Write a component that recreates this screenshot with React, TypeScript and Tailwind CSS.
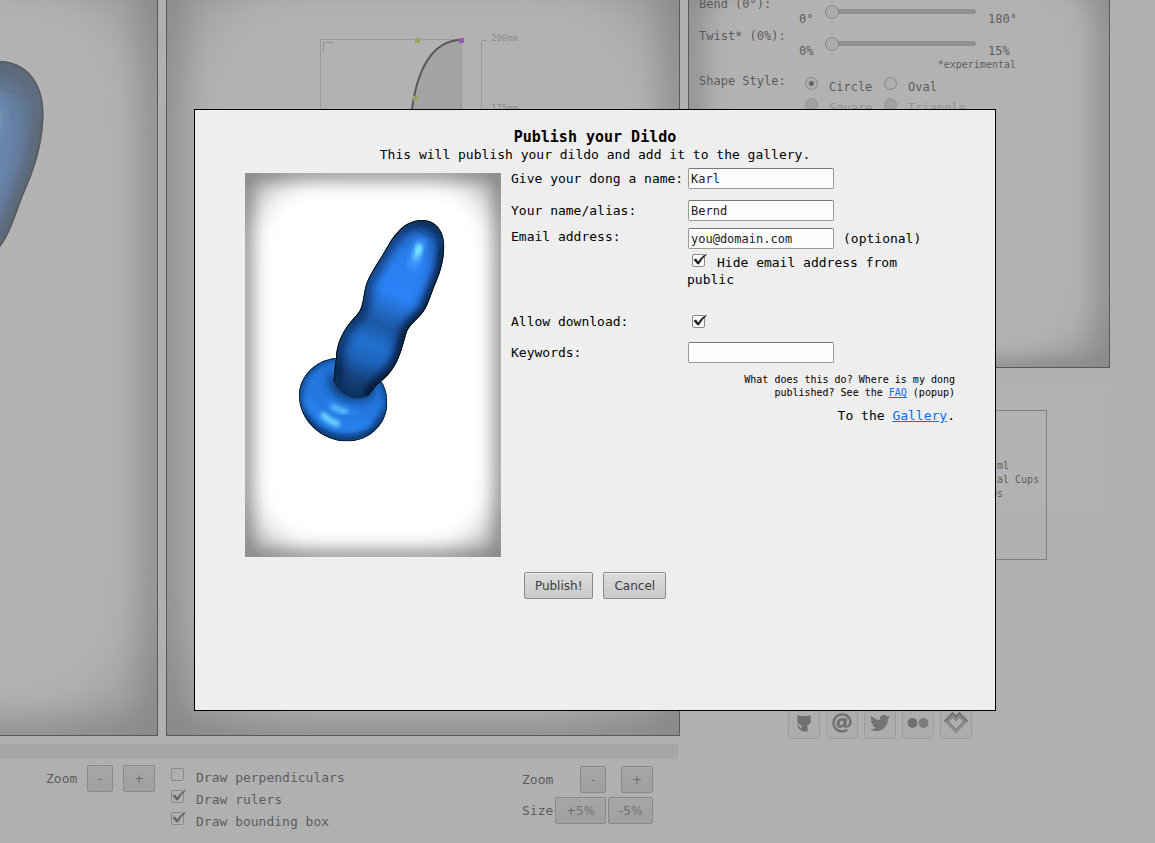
import React from "react";
import { FaAt, FaTwitter } from "react-icons/fa";

const SHAFT =
  "M547 165 C585 165 613 195 613 245 C611 300 596 335 580 372 C568 405 560 430 545 447 C530 465 512 478 502 497 C493 520 488 555 470 592 C455 622 435 640 418 655 C402 667 396 680 385 692 C350 715 300 690 280 650 C284 625 283 600 288 580 C288 550 297 520 318 488 C335 463 350 452 360 435 C372 410 370 375 382 348 C395 318 425 275 446 238 C470 197 500 165 547 165 Z";
const SHAFT_SIDES =
  "M280 650 C284 625 283 600 288 580 C288 550 297 520 318 488 C335 463 350 452 360 435 C372 410 370 375 382 348 C395 318 425 275 446 238 C470 197 500 165 547 165 C585 165 613 195 613 245 C611 300 596 335 580 372 C568 405 560 430 545 447 C530 465 512 478 502 497 C493 520 488 555 470 592 C455 622 435 640 418 655 C402 667 396 680 385 692";
const SHAFT_RIGHT =
  "M613 245 C611 300 596 335 580 372 C568 405 560 430 545 447 C530 465 512 478 502 497 C493 520 488 555 470 592 C455 622 435 640 418 655 C402 667 396 680 385 692";
const FOOT =
  "M287 579 C225 585 177 635 177 692 C177 765 245 829 322 829 C390 829 442 775 442 713 C442 688 435 665 425 650 L350 620 Z";
const FOOT_RIM =
  "M287 579 C225 585 177 635 177 692 C177 765 245 829 322 829 C390 829 442 775 442 713 C442 688 435 665 425 650";

function Vignette({ id }: { id: string }) {
  return (
    <svg
      className="absolute inset-0 h-full w-full"
      viewBox="0 0 256 384"
      preserveAspectRatio="none"
      aria-hidden="true"
    >
      <defs>
        <filter
          id={`${id}-soft`}
          x="-20%"
          y="-20%"
          width="140%"
          height="140%"
          colorInterpolationFilters="sRGB"
        >
          <feGaussianBlur stdDeviation="14" />
        </filter>
        <filter id={`${id}-edge`} x="-20%" y="-20%" width="140%" height="140%">
          <feGaussianBlur stdDeviation="8" />
        </filter>
      </defs>
      <rect width="256" height="384" fill="#b8b8b8" />
      <rect x="1" y="1" width="254" height="382" rx="72" fill="#ffffff" filter={`url(#${id}-soft)`} />
      <rect
        width="256"
        height="384"
        fill="none"
        stroke="#000000"
        strokeWidth="12"
        opacity="0.35"
        filter={`url(#${id}-edge)`}
      />
    </svg>
  );
}

function Model({ id }: { id: string }) {
  return (
    <svg className="absolute inset-0 h-full w-full" viewBox="15 24 768 1152" aria-hidden="true">
      <defs>
        <clipPath id={`${id}-shaft`}>
          <path d={SHAFT} />
        </clipPath>
        <clipPath id={`${id}-foot`}>
          <path d={FOOT} />
        </clipPath>
        <linearGradient id={`${id}-body`} gradientUnits="userSpaceOnUse" x1="565" y1="165" x2="325" y2="700">
          <stop offset="0" stopColor="#164a8c" />
          <stop offset="0.1" stopColor="#2370d4" />
          <stop offset="0.25" stopColor="#2a80f2" />
          <stop offset="0.42" stopColor="#2a82f6" />
          <stop offset="0.52" stopColor="#2269c4" />
          <stop offset="0.59" stopColor="#1c59a6" />
          <stop offset="0.7" stopColor="#2170d0" />
          <stop offset="0.78" stopColor="#1f66be" />
          <stop offset="0.9" stopColor="#143f78" />
          <stop offset="1" stopColor="#0f3058" />
        </linearGradient>
        <filter id={`${id}-b5`} x="-50%" y="-50%" width="200%" height="200%">
          <feGaussianBlur stdDeviation="6" />
        </filter>
        <filter id={`${id}-b10`} x="-50%" y="-50%" width="200%" height="200%">
          <feGaussianBlur stdDeviation="10" />
        </filter>
        <filter id={`${id}-b18`} x="-50%" y="-50%" width="200%" height="200%">
          <feGaussianBlur stdDeviation="18" />
        </filter>
      </defs>
      <g clipPath={`url(#${id}-foot)`}>
        <path d={FOOT} fill="#2478e0" />
        <path d={FOOT_RIM} fill="none" stroke="#062a58" strokeWidth="12" filter={`url(#${id}-b10)`} />
        <path d="M185 740 C225 810 310 850 400 800 L440 740" fill="none" stroke="#0b3468" strokeWidth="16" filter={`url(#${id}-b10)`} />
        <path d="M268 630 C262 690 335 722 398 692 L400 640 Z" fill="#0a2a52" opacity="0.95" filter={`url(#${id}-b18)`} />
        <path d="M205 700 C225 765 300 805 385 770" fill="none" stroke="#2f8cfa" strokeWidth="24" opacity="0.6" filter={`url(#${id}-b10)`} />
        <path d="M262 706 Q290 742 350 742" fill="none" stroke="#3490f8" strokeWidth="16" opacity="0.8" filter={`url(#${id}-b10)`} />
        <path d="M275 722 Q294 738 322 740" fill="none" stroke="#5cc4ff" strokeWidth="16" filter={`url(#${id}-b5)`} />
        <path d="M246 746 Q266 770 298 778" fill="none" stroke="#6fdcff" strokeWidth="18" filter={`url(#${id}-b5)`} />
        <g fill="none" stroke="#0d396e" strokeWidth="3" opacity="0.3">
          <path d="M195 750 C230 810 330 832 412 778" />
          <path d="M202 768 C240 820 335 842 410 790" />
          <path d="M214 784 C252 832 335 848 402 806" />
        </g>
        <path d={FOOT_RIM} fill="none" stroke="#04172f" strokeWidth="5" />
      </g>
      <g clipPath={`url(#${id}-shaft)`}>
        <path d={SHAFT} fill={`url(#${id}-body)`} />
        <path d={SHAFT_SIDES} fill="none" stroke="#020c1c" strokeWidth="30" opacity="0.8" filter={`url(#${id}-b18)`} />
        <path d={SHAFT_RIGHT} fill="none" stroke="#020c1c" strokeWidth="20" opacity="0.7" filter={`url(#${id}-b10)`} />
        <path d="M288 672 C308 698 345 712 376 696" fill="none" stroke="#0f3564" strokeWidth="14" filter={`url(#${id}-b5)`} />
        <g fill="none" stroke="#0c366b" strokeWidth="3" opacity="0.4">
          <path d="M545 176 Q562 192 590 186" />
          <path d="M535 180 Q560 206 602 200" />
          <path d="M526 188 Q560 222 608 214" />
        </g>
        <path d="M546 225 L515 310" fill="none" stroke="#3c98ff" strokeWidth="34" filter={`url(#${id}-b10)`} />
        <path d="M541 240 L524 286" fill="none" stroke="#5cc0ff" strokeWidth="22" filter={`url(#${id}-b5)`} />
        <path d="M540 242 L530 268" fill="none" stroke="#7cf0ff" strokeWidth="16" filter={`url(#${id}-b5)`} />
        <path d={SHAFT_SIDES} fill="none" stroke="#020a16" strokeWidth="5" />
      </g>
    </svg>
  );
}

function Curve() {
  return (
    <svg className="absolute inset-0 h-full w-full" viewBox="0 0 512 768" aria-hidden="true">
      <path
        d="M294.500 73 C264 73 250 105 245 142 C235 230 190 300 200 420 L294.500 420 Z"
        fill="#d6d6d6"
      />
      <rect x="153.500" y="72.500" width="141" height="400" fill="none" stroke="#bbbbbb" />
      <path d="M156.500 85 V75.500 H166" fill="none" stroke="#a0a0a0" />
      <path d="M294.500 73 C264 73 250 105 245 142 C235 230 190 300 200 420" fill="none" stroke="#000000" strokeWidth="2" />
      <rect x="248" y="71" width="5" height="5" fill="#bcd333" />
      <rect x="246" y="129" width="5" height="5" fill="#bcd333" />
      <rect x="292" y="71" width="5" height="5" fill="#c000ff" />
      <path d="M320 73.500 H314.500 V470" fill="none" stroke="#b4b4b4" />
      <g fill="#909090" fontSize="9" fontFamily="'DejaVu Sans Mono', monospace">
        <text x="324" y="74">200mm</text>
        <text x="324" y="144">175mm</text>
      </g>
    </svg>
  );
}

function Canvas({ id, children }: { id: string; children: React.ReactNode }) {
  return (
    <div className="relative h-[770px] w-[514px] border border-black">
      <Vignette id={id} />
      {children}
    </div>
  );
}

function Check({ id, checked }: { id: string; checked?: boolean }) {
  return (
    <span className="relative inline-block h-[13px] w-[13px] shrink-0">
      <input
        id={id}
        type="checkbox"
        defaultChecked={checked}
        className="peer block h-[13px] w-[13px] appearance-none rounded-xs border border-[#8a8a8a] bg-[#fafafa]"
      />
      <svg
        className="pointer-events-none absolute bottom-0 left-0 hidden h-4 w-4 peer-checked:block"
        viewBox="0 0 16 16"
        aria-hidden="true"
      >
        <path d="M1.500 8.800 L4 7.600 L6.200 10.500 Q9.500 5.200 14.200 3 L14.800 3.600 Q10.500 7.200 7 13.300 H5.400 Z" fill="#222222" />
      </svg>
    </span>
  );
}

function Button({ children, className = "" }: { children: React.ReactNode; className?: string }) {
  return (
    <button
      type="button"
      className={`h-[27px] rounded-xs border border-[#8a8a8a] bg-linear-to-b from-[#dcdcdc] to-[#c9c9c9] px-[10px] font-['DejaVu_Sans',sans-serif] text-[12px] text-[#3c3c3c] shadow-[inset_0_1px_0_#eeeeee] ${className}`}
    >
      {children}
    </button>
  );
}

function SliderRow({ id, label, min, max }: { id: string; label: string; min: string; max: string }) {
  return (
    <div className="flex h-8 items-start">
      <label htmlFor={id} className="w-[100px] leading-[18px]">
        {label}
      </label>
      <span className="mt-4 w-[26px] leading-4">{min}</span>
      <input
        id={id}
        type="range"
        min="0"
        max="100"
        defaultValue="0"
        className="mt-[14px] h-[5px] w-[151px] appearance-none rounded-full bg-[#a0a0a0] [&::-webkit-slider-thumb]:h-[14px] [&::-webkit-slider-thumb]:w-[14px] [&::-webkit-slider-thumb]:appearance-none [&::-webkit-slider-thumb]:rounded-full [&::-webkit-slider-thumb]:border [&::-webkit-slider-thumb]:border-[#808080] [&::-webkit-slider-thumb]:bg-[#eeeeee]"
      />
      <span className="mt-4 ml-3 leading-4">{max}</span>
    </div>
  );
}

function Shape({ label, checked, disabled }: { label: string; checked?: boolean; disabled?: boolean }) {
  return (
    <label className={`flex items-start gap-[11px] ${disabled ? "text-[#aaaaaa]" : ""}`}>
      <input
        type="radio"
        name="shape"
        defaultChecked={checked}
        disabled={disabled}
        className="h-[13px] w-[13px] appearance-none rounded-full border border-[#808080] bg-[#f4f4f4] checked:bg-[radial-gradient(circle,#222222_0_2px,transparent_3px)] disabled:border-[#aaaaaa] disabled:bg-[#cccccc]"
      />
      <span className="mt-[2px] leading-4">{label}</span>
    </label>
  );
}

function CatIcon() {
  return (
    <svg className="h-[18px] w-4" viewBox="0 0 16 18" aria-hidden="true">
      <path
        d="M1.800 1 L4.500 2 H11.500 L14.200 1 Q15 3 14.600 4.500 Q15.200 6 14.800 8 Q14 11 10.800 11.400 Q11.500 12 11.500 13.500 V16 L12.500 17.500 H5 L6 16.200 Q3.500 16.200 2.700 14.500 Q2.200 12.800 1 12.300 L1.200 11.300 Q3 11.400 3.800 13 Q4.500 14.300 5.600 14 Q5.300 12 5.800 11.400 Q2 11 1.500 8 Q1 6 1.600 4.500 Q1 3 1.800 1 Z"
        fill="#444444"
      />
    </svg>
  );
}

function HeartIcon() {
  return (
    <svg className="h-[22px] w-6" viewBox="0 0 24 22" aria-hidden="true">
      <path d="M0.500 9.500 L8.500 1 L12 4.500 L15.500 1 L23.500 9.500 L12 21.500 Z" fill="#8c8c8c" />
      <path d="M0.500 9.500 L8.500 1 L12 4.500 L15.500 1 L23.500 9.500" fill="none" stroke="#2a2a2a" strokeWidth="1.500" />
      <path d="M4.500 9.500 L8.500 5.200 L12 8.800 L15.500 5.200 L19.500 9.500 L12 17.200 Z" fill="#f4f4f4" stroke="#666666" strokeWidth="1" />
    </svg>
  );
}

const SOCIAL = [
  { name: "GitHub", icon: <CatIcon /> },
  { name: "Mail", icon: <FaAt size={20} /> },
  { name: "Twitter", icon: <FaTwitter size={20} /> },
  {
    name: "Flickr",
    icon: (
      <svg className="h-[22px] w-[22px]" viewBox="0 0 22 22" aria-hidden="true">
        <circle cx="5.500" cy="11" r="5" fill="#444444" />
        <circle cx="16.500" cy="11" r="5" fill="#666666" />
      </svg>
    ),
  },
  { name: "Heart", icon: <HeartIcon /> },
];

function Editor() {
  return (
    <div className="-mt-[34px] -ml-[356px] flex w-max items-start gap-2">
      <div className="flex flex-col">
        <div className="flex gap-2">
          <Canvas id="preview">
            <Model id="preview-model" />
          </Canvas>
          <Canvas id="bezier">
            <Curve />
          </Canvas>
        </div>
        <div className="mt-2 mr-[2px] h-[15px] bg-[#dcdcdc]" />
        <div className="flex items-start pt-[6px] pl-[402px]">
          <div className="flex w-[125px] items-center">
            <span className="w-[41px]">Zoom</span>
            <Button className="w-[26px] px-0">-</Button>
            <Button className="ml-[10px] w-8 px-0">+</Button>
          </div>
          <div className="flex w-[351px] flex-col pt-[3px]">
            {[
              { id: "perpendiculars", label: "Draw perpendiculars", on: false },
              { id: "rulers", label: "Draw rulers", on: true },
              { id: "bounds", label: "Draw bounding box", on: true },
            ].map((o) => (
              <div key={o.id} className="flex h-[22px] items-start gap-3">
                <Check id={o.id} checked={o.on} />
                <label htmlFor={o.id} className="leading-5">
                  {o.label}
                </label>
              </div>
            ))}
          </div>
          <div className="flex w-[131px] flex-col gap-1 pt-px">
            <div className="flex items-center">
              <span className="w-[58px]">Zoom</span>
              <Button className="w-[26px] px-0">-</Button>
              <Button className="ml-auto w-8 px-0">+</Button>
            </div>
            <div className="flex items-center">
              <span className="w-[33px]">Size</span>
              <Button className="w-[51px] px-0">+5%</Button>
              <Button className="ml-auto w-[45px] px-0">-5%</Button>
            </div>
          </div>
        </div>
      </div>
      <div className="flex w-[422px] flex-col">
        <div className="relative h-[402px] border border-black text-[12px]">
          <Vignette id="settings" />
          <div className="relative pt-7 pl-[10px]">
            <SliderRow id="bend" label="Bend (0°):" min="0°" max="180°" />
            <SliderRow id="twist" label="Twist* (0%):" min="0%" max="15%" />
            <p className="w-[317px] text-right text-[10px] leading-3">*experimental</p>
            <div className="mt-[2px] flex items-start">
              <span className="w-[106px] leading-4">Shape Style:</span>
              <div className="mt-1 grid grid-cols-[79px_auto] gap-y-[3px]">
                <Shape label="Circle" checked />
                <Shape label="Oval" />
                <Shape label="Square" disabled />
                <Shape label="Triangle" disabled />
              </div>
            </div>
          </div>
        </div>
        <div className="mt-[18px] mr-[2px] h-[120px] bg-white pt-6">
          <div className="mr-[61px] h-[150px] border border-[#6f6f6f] pt-12 pl-[302px] text-[10px] leading-[14px] whitespace-pre">
            <p> ml</p>
            <p>ial Cups</p>
            <p>ps</p>
          </div>
        </div>
        <div className="mt-[201px] ml-[100px] flex gap-[6px]">
          {SOCIAL.map((s) => (
            <a
              key={s.name}
              href="#"
              aria-label={s.name}
              className="flex h-8 w-8 items-center justify-center rounded-sm border border-[#c0c0c0] bg-[#f0f0f0] text-[#4a4a4a]"
            >
              {s.icon}
            </a>
          ))}
        </div>
      </div>
    </div>
  );
}

function Field({ id, value, type = "text" }: { id: string; value?: string; type?: string }) {
  return (
    <input
      id={id}
      type={type}
      defaultValue={value}
      className="ml-px h-[21px] w-[146px] rounded-xs border border-[#999999] border-t-[#777777] bg-[#fcfcfc] px-[2px] text-[12px] text-[#222222] outline-none"
    />
  );
}

function PublishDialog() {
  return (
    <div
      role="dialog"
      aria-labelledby="publish-title"
      className="flex min-h-[602px] w-full max-w-[802px] flex-col border border-black bg-[#eeeeee] pt-[18px] pr-10 pb-4 pl-[50px]"
    >
      <div className="mr-[-40px] ml-[-50px] text-center leading-[18px]">
        <h1 id="publish-title" className="text-[15px] font-bold">
          Publish your Dildo
        </h1>
        <p>This will publish your dildo and add it to the gallery.</p>
      </div>
      <div className="mt-1 flex items-start gap-[10px]">
        <div className="relative mt-[5px] h-[384px] w-[256px] shrink-0">
          <Vignette id="thumb" />
          <Model id="thumb-model" />
        </div>
        <form className="grid grow grid-cols-[176px_1fr] leading-[17px]">
          <label htmlFor="model" className="pt-[2px]">
            Give your dong a name:
          </label>
          <div className="flex h-8 items-start">
            <Field id="model" value="Karl" />
          </div>
          <label htmlFor="alias" className="pt-[2px]">
            Your name/alias:
          </label>
          <div className="flex h-7 items-start">
            <Field id="alias" value="Bernd" />
          </div>
          <label htmlFor="email">Email address:</label>
          <div className="h-[85px]">
            <div className="flex items-center gap-[9px]">
              <Field id="email" value="you@domain.com" />
              <span>(optional)</span>
            </div>
            <div className="mt-[5px] max-w-[240px]">
              <span className="mr-3 ml-[5px] inline-flex h-[17px] items-start align-top">
                <Check id="hide" checked />
              </span>
              <label htmlFor="hide">Hide email address from public</label>
            </div>
          </div>
          <label htmlFor="download">Allow download:</label>
          <div className="flex h-[29px] items-start pt-[2px] pl-[5px]">
            <Check id="download" checked />
          </div>
          <label htmlFor="keywords" className="pt-[2px]">
            Keywords:
          </label>
          <div className="flex h-[31px] items-start">
            <Field id="keywords" />
          </div>
          <div className="col-span-2 flex flex-col items-end text-right">
            <p className="text-[10px] leading-[13px]">
              <span>What does this do? Where is my dong</span>
              <br />
              <span>published? See the </span>
              <a href="#faq" className="text-[#0070ff] underline">
                FAQ
              </a>
              <span> (popup)</span>
            </p>
            <p className="mt-2">
              To the{" "}
              <a href="#gallery" className="text-[#0070ff] underline">
                Gallery
              </a>
              .
            </p>
          </div>
        </form>
      </div>
      <div className="mr-[-40px] ml-[-50px] flex justify-center gap-[10px] pt-[15px]">
        <Button>Publish!</Button>
        <Button>Cancel</Button>
      </div>
    </div>
  );
}

export default function App() {
  return (
    <div className="relative h-screen overflow-hidden bg-[#fafafa] font-['DejaVu_Sans_Mono',monospace] text-[13px] text-black">
      <Editor />
      <div className="absolute inset-0 bg-[#888888]/65" />
      <div className="absolute inset-0 pt-[109px] pr-5 pl-[194px]">
        <PublishDialog />
      </div>
    </div>
  );
}
